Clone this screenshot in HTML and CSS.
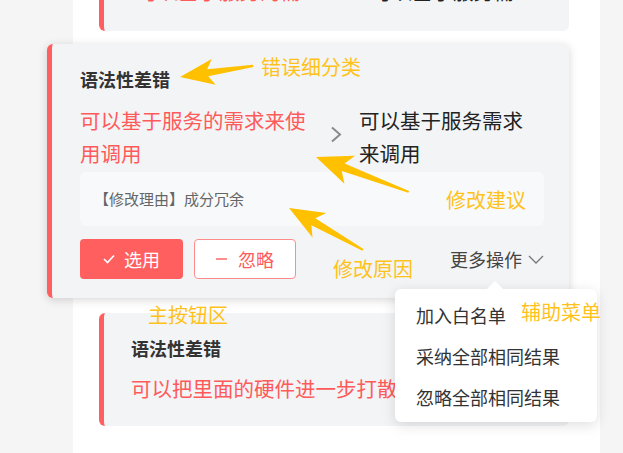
FILE: index.html
```html
<!DOCTYPE html>
<html lang="zh-CN">
<head>
    <meta charset="UTF-8">
    <meta name="viewport" content="width=device-width, initial-scale=1.0">
    <title>纠错卡片说明</title>
    <link rel="stylesheet" href="styles.css">
</head>
<body>
    <div class="page">
        <div class="panel">
            <div class="card card_top">
                <div class="card_title">语法性差错</div>
                <div class="card_line">
                    <span class="txt_red top_red">可以基于服务的需</span>
                    <span class="txt_dark">可以基于服务需</span>
                </div>
            </div>

            <div class="card card_active">
                <div class="card_title">语法性差错</div>
                <div class="fix_row">
                    <div class="fix_old">可以基于服务的需求来使用调用</div>
                    <div class="fix_arrow">
                        <svg width="12" height="17" viewBox="0 0 12 17"><polyline points="2,1.5 10,8.5 2,15.5" fill="none" stroke="#8a8a8a" stroke-width="2"/></svg>
                    </div>
                    <div class="fix_new">可以基于服务需求来调用</div>
                </div>
                <div class="reason">【修改理由】成分冗余</div>
                <div class="btn_row">
                    <button class="btn btn_main">
                        <svg width="12" height="10" viewBox="0 0 12 10"><polyline points="1,5 4.5,8.5 11,1.5" fill="none" stroke="#fff" stroke-width="1.6"/></svg>
                        <span>选用</span>
                    </button>
                    <button class="btn btn_ghost">
                        <svg width="11" height="10" viewBox="0 0 11 10"><line x1="0" y1="5" x2="11" y2="5" stroke="#ff5c5c" stroke-width="1.4"/></svg>
                        <span>忽略</span>
                    </button>
                    <div class="more">
                        <span>更多操作</span>
                        <svg width="16" height="9" viewBox="0 0 16 9"><polyline points="1,1 8,8 15,1" fill="none" stroke="#777" stroke-width="1.3"/></svg>
                    </div>
                </div>

                <div class="menu">
                    <div class="menu_item">加入白名单</div>
                    <div class="menu_item">采纳全部相同结果</div>
                    <div class="menu_item">忽略全部相同结果</div>
                </div>
            </div>

            <div class="card card_bottom">
                <div class="card_title">语法性差错</div>
                <div class="card_line">
                    <span class="txt_red">可以把里面的硬件进一步打散处理</span>
                </div>
            </div>
        </div>

        <!-- annotations drawn over the screenshot -->
        <div class="notes">
            <svg class="arrows" width="623" height="453" viewBox="0 0 623 453">
                <g transform="translate(180,77) rotate(-8.6)">
                    <polygon points="0,0 34,-13 28,-3.5 74,-1.2 74,1.2 28,3.5 34,13" fill="#ffc000"/>
                </g>
                <g transform="translate(316,157) rotate(20.6)">
                    <polygon points="0,0 36,-15 29,-4 99,-1 99,1 29,4 36,15" fill="#ffc000"/>
                </g>
                <g transform="translate(289,208) rotate(29.6)">
                    <polygon points="0,0 35,-14 28,-4 85,-1 85,1 28,4 35,14" fill="#ffc000"/>
                </g>
            </svg>
            <span class="note note_type">错误细分类</span>
            <span class="note note_fix">修改建议</span>
            <span class="note note_reason">修改原因</span>
            <span class="note note_btn">主按钮区</span>
            <span class="note note_menu">辅助菜单</span>
        </div>
    </div>
</body>
</html>
```

FILE: styles.css
```css
*{margin: 0; padding: 0; box-sizing: border-box;}
body{background: #f5f5f6; font-family: "Noto Sans CJK SC", "Noto Sans", sans-serif; overflow: hidden;}
.page{position: relative; width: 623px; height: 453px; overflow: hidden;}
.panel{margin-left: 73px; width: 527px; min-height: 453px; background: #fff; padding-bottom: 30px;}

.card{position: relative; background: #f3f4f6; border-left: 5px solid #ff5f5f; border-radius: 6px; margin: 0 31px 0 26px;}
.card_title{font-size: 18px; font-weight: bold; line-height: 26px; color: #333;}
.card_line{display: flex; font-size: 20.5px; line-height: 33px; margin-top: 10.5px; white-space: nowrap; overflow: hidden;}
.txt_red{color: #ff5a5a;}
.txt_dark{color: #222;}

.card_top{margin-top: -84px; padding: 22px 20px 23.5px 27px;}
.top_red{width: 240px; padding-left: 6px; overflow: hidden;}
.card_bottom{margin-top: 15px; padding: 22px 0 21.5px 27px;}

.card_active{margin: 13px 31px 0 -26px; padding: 22px 25px 19px 28px; box-shadow: 0 2px 10px rgba(0,0,0,0.16); z-index: 2;}
.card_active .card_title{margin-bottom: 12px;}
.fix_row{display: flex; font-size: 20.5px; line-height: 33px;}
.fix_old{width: 232px; color: #ff5a5a;}
.fix_arrow{width: 47px; display: flex; align-items: center; justify-content: center; padding-bottom: 6px;}
.fix_new{width: 175px; color: #222;}
.reason{margin-top: 2px; height: 54px; line-height: 54px; padding: 0 14px; background: #f8f9fa; border-radius: 6px; font-size: 15px; color: #666;}

.btn_row{display: flex; align-items: center; margin-top: 13px;}
.btn{height: 40px; display: flex; align-items: center; justify-content: center; gap: 9px; border-radius: 4px; font-family: inherit; font-size: 18px; cursor: pointer;}
.btn_main{width: 103px; background: #ff5f5f; border: none; color: #fff;}
.btn_ghost{width: 102px; margin-left: 11px; background: #fff; border: 1px solid #ff8c8c; color: #ff5c5c; gap: 11px;}
.more{margin-left: auto; display: flex; align-items: center; gap: 6px; font-size: 18px; color: #444;}

.menu{position: absolute; left: 343px; top: 245px; width: 202px; padding: 6px 0 4px; background: #fff; border-radius: 6px; box-shadow: 0 3px 14px rgba(0,0,0,0.13);}
.menu:before{content: ""; position: absolute; top: -8px; left: 92px; border: 8px solid transparent; border-top: 0; border-bottom-color: #fff;}
.menu_item{height: 41px; line-height: 41px; padding-left: 21px; font-size: 18px; color: #333;}

.notes{position: absolute; left: 0; top: 0; width: 623px; height: 453px; pointer-events: none; z-index: 5;}
.arrows{position: absolute; left: 0; top: 0;}
.note{position: absolute; font-size: 20px; line-height: 24px; color: #ffc21a; white-space: nowrap;}
.note_type{left: 261px; top: 55px;}
.note_fix{left: 446px; top: 188px;}
.note_reason{left: 333px; top: 257px;}
.note_btn{left: 148px; top: 303px;}
.note_menu{left: 521px; top: 300px;}
```
